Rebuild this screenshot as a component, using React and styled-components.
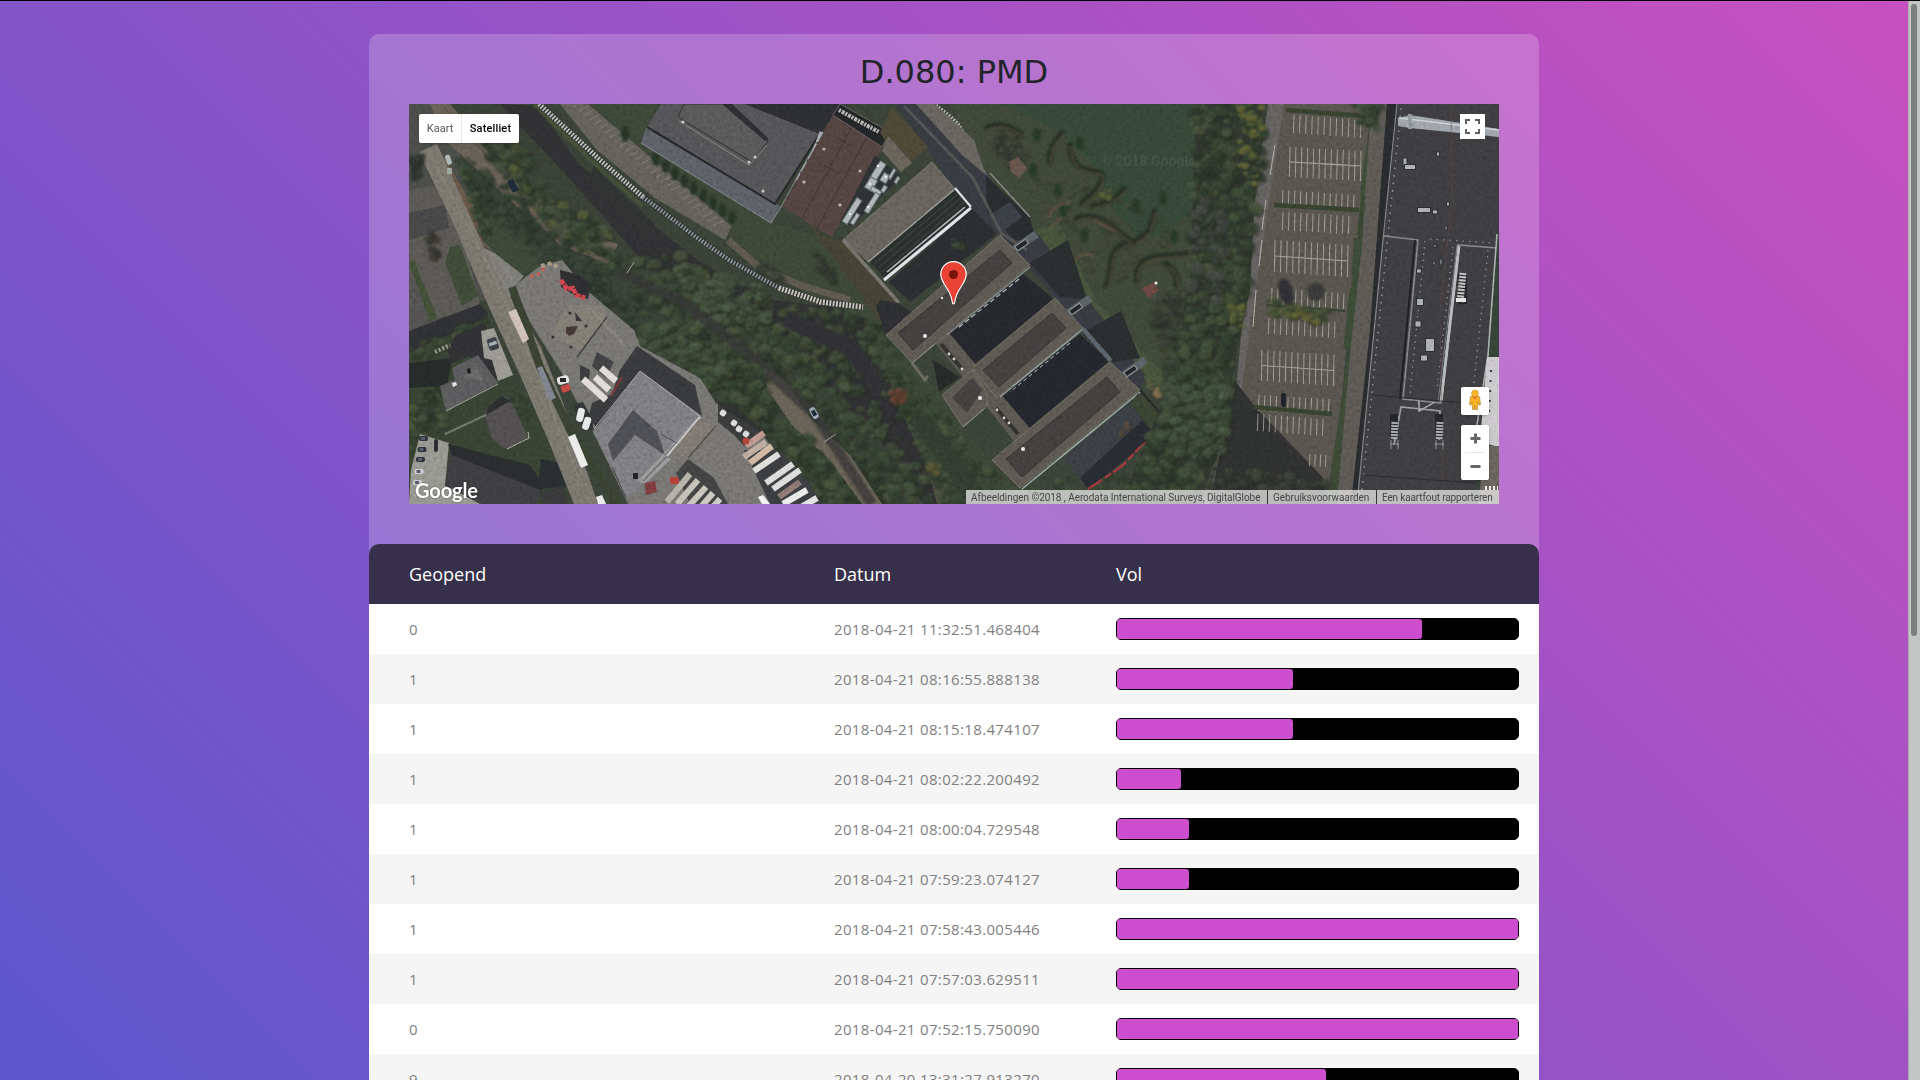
import React from "react";
import styled, { createGlobalStyle } from "styled-components";

const GlobalStyle = createGlobalStyle`
  * { box-sizing: border-box; }
  body { margin: 0; overflow: hidden; font-family: "Open Sans", "Noto Sans", sans-serif; }
`;

const Window = styled.div`
  display: flex;
  height: 1080px;
  overflow: hidden;
  border-top: 1px solid #000;
`;
const Page = styled.main`
  flex: 1;
  height: 1831px;
  display: flex;
  justify-content: center;
  align-items: flex-start;
  padding-top: 33px;
  background: linear-gradient(45deg, #4158d0, #c850c0);
`;
const Scrollbar = styled.div`
  width: 12px;
  height: 1079px;
  padding: 3px 3px 0 2px;
  background: #c4c6c5;
  border-left: 1px solid #a9adab;
`;
const Thumb = styled.div`
  width: 6px;
  height: 632px;
  border-radius: 3px;
  background: #7b8081;
`;
const Panel = styled.section`
  width: 1170px;
  border-radius: 10px;
  background: rgba(255, 255, 255, 0.2);
`;
const Title = styled.h2`
  margin: 0;
  padding: 19px 0 13px;
  font: 400 32px/38px "DejaVu Sans", sans-serif;
  color: #212529;
  text-align: center;
`;
const MapFrame = styled.div`
  position: relative;
  height: 400px;
  margin: 0 40px 40px;
  overflow: hidden;
  font-family: Roboto, sans-serif;
  & > svg { display: block; }
`;
const MapTypes = styled.div`
  position: absolute;
  left: 10px;
  top: 10px;
  height: 29px;
  display: flex;
  background: #fff;
  border-radius: 2px;
  box-shadow: 0 1px 4px -1px rgba(0, 0, 0, 0.3);
`;
const MapType = styled.button`
  border: 0;
  padding: 0;
  width: ${(p) => p.$width}px;
  background: transparent;
  border-left: ${(p) => (p.$active ? "1px solid #e8e8e8" : "0")};
  font: ${(p) => (p.$active ? 500 : 400)} 11px Roboto, sans-serif;
  letter-spacing: ${(p) => (p.$active ? 0.15 : 0)}px;
  color: ${(p) => (p.$active ? "#000" : "#565656")};
`;
const FullScreen = styled.button`
  position: absolute;
  right: 14px;
  top: 10px;
  width: 25px;
  height: 25px;
  border: 0;
  padding: 5px;
  background: #fff;
  svg { display: block; }
`;
const MapTools = styled.div`
  position: absolute;
  right: 10px;
  top: 283px;
  display: flex;
  flex-direction: column;
  gap: 10px;
`;
const ToolBox = styled.div`
  width: 28px;
  height: ${(p) => p.$height}px;
  background: #fff;
  border-radius: 2px;
  box-shadow: 0 1px 4px -1px rgba(0, 0, 0, 0.3);
  svg { display: block; }
`;
const Attribution = styled.div`
  position: absolute;
  right: 0;
  bottom: 0;
  height: 14px;
  display: flex;
  font-size: 10px;
  line-height: 15px;
  color: #444;
`;
const Credit = styled.span`
  width: ${(p) => p.$width}px;
  padding-left: 5px;
  white-space: nowrap;
  letter-spacing: ${(p) => p.$track || 0}px;
  background: rgba(245, 245, 245, 0.7);
  & + & { border-left: 1px solid #333; }
`;
const Logo = styled.div`
  position: absolute;
  left: 6px;
  bottom: 3px;
  font: 700 20px/22px Lato, sans-serif;
  letter-spacing: -0.1px;
  color: #fff;
  text-shadow: 0 0 2px rgba(0, 0, 0, 0.5);
`;
const Table = styled.div`
  border-radius: 10px 10px 0 0;
  overflow: hidden;
`;
const Row = styled.div`
  display: grid;
  grid-template-columns: 425px 282px 403px;
  align-items: center;
  padding-left: 40px;
  height: 50px;
  font-size: 15px;
  letter-spacing: 0.35px;
  color: #808080;
  background: ${(p) => (p.$even ? "#f5f5f5" : "#fff")};
`;
const HeadRow = styled(Row)`
  height: 60px;
  font-size: 18px;
  letter-spacing: 0;
  color: #fff;
  background: #36304a;
`;
const Track = styled.div`
  height: 22px;
  border: 1px solid #000;
  border-radius: 5px;
  background: #000;
`;
const Fill = styled.div`
  height: 20px;
  border-radius: 3px;
  background: #cc4ecf;
`;

const rows = [
  ["0", "2018-04-21 11:32:51.468404", 76],
  ["1", "2018-04-21 08:16:55.888138", 44],
  ["1", "2018-04-21 08:15:18.474107", 44],
  ["1", "2018-04-21 08:02:22.200492", 16],
  ["1", "2018-04-21 08:00:04.729548", 18],
  ["1", "2018-04-21 07:59:23.074127", 18],
  ["1", "2018-04-21 07:58:43.005446", 100],
  ["1", "2018-04-21 07:57:03.629511", 100],
  ["0", "2018-04-21 07:52:15.750090", 100],
  ["9", "2018-04-20 13:31:27.913270", 52],
];

/* ---------- aerial scene ---------- */
function random(seed) {
  let s = seed;
  return () => {
    s = (s * 1664525 + 1013904223) % 4294967296;
    return s / 4294967296;
  };
}
function inside(x, y, pts) {
  let hit = false;
  for (let i = 0, j = pts.length - 1; i < pts.length; j = i++) {
    const [xi, yi] = pts[i];
    const [xj, yj] = pts[j];
    if (yi > y !== yj > y && x < ((xj - xi) * (y - yi)) / (yj - yi) + xi) hit = !hit;
  }
  return hit;
}
const parse = (text) => text.split(" ").map((p) => p.split(",").map(Number));

const greens = ["#2c3829", "#34422f", "#3b4935", "#272f26", "#414b36", "#2e3b2c", "#394330"];
const dims = ["#2d332c", "#343a31", "#292d2a", "#393f34", "#30372e"];

function Canopy({ area, count, seed, size = 6, colors = greens }) {
  const pts = parse(area);
  const xs = pts.map((p) => p[0]);
  const ys = pts.map((p) => p[1]);
  const x0 = Math.min(...xs), x1 = Math.max(...xs);
  const y0 = Math.min(...ys), y1 = Math.max(...ys);
  const rnd = random(seed);
  const total = Math.round(count * 1.3);
  const items = [];
  let guard = 0;
  while (items.length < total && guard++ < total * 20) {
    const x = x0 + rnd() * (x1 - x0);
    const y = y0 + rnd() * (y1 - y0);
    if (!inside(x, y, pts)) continue;
    const r = size * (0.2 + rnd() * 0.75);
    const c = colors[Math.floor(rnd() * colors.length)];
    items.push(
      <g key={items.length}>
        <ellipse cx={x + r * 0.35} cy={y + r * 0.4} rx={r} ry={r * 0.8} fill="#20251f" opacity=".4" />
        <ellipse cx={x} cy={y} rx={r} ry={r * 0.75} fill={c} opacity=".75" />
        <circle cx={x - r * 0.3} cy={y - r * 0.3} r={r * 0.3} fill="#59634a" opacity=".25" />
      </g>
    );
  }
  return <g filter="url(#leaves)">{items}</g>;
}
const P = ({ d, c, o, s, w }) => <polygon points={d} fill={c} opacity={o} stroke={s} strokeWidth={w} />;
const L = ({ d, c, w = 1, o, dash }) => (
  <polyline points={d} fill="none" stroke={c} strokeWidth={w} opacity={o} strokeDasharray={dash} />
);

const bays = [
  [1294, 1361, 115, 18, 5, false], [1290, 1361, 147, 30, 4, true], [1283, 1354, 190, 16, 5, false],
  [1283, 1349, 212, 18, 4, false], [1275, 1348, 240, 32, 5, true], [1272, 1344, 288, 16, 5, false],
  [1269, 1335, 318, 16, 4, false], [1262, 1334, 350, 31, 5, true], [1259, 1329, 395, 16, 4, false],
  [1258, 1323, 414, 17, 5, false], [1310, 1326, 454, 12, 1, false],
];
function Bays() {
  return bays.map(([a, b, y, h, drop, cross], k) => {
    const n = Math.round((b - a) / 6);
    return (
      <g key={k} stroke="#aaa79e" strokeWidth=".9" opacity=".75">
        {Array.from({ length: n + 1 }, (_, i) => {
          const x = a + ((b - a) * i) / n;
          const yy = y + (drop * i) / n;
          return <line key={i} x1={x} y1={yy} x2={x - 0.6} y2={yy + h} />;
        })}
        {cross && <line x1={a} y1={y + h / 2} x2={b} y2={y + h / 2 + drop} strokeWidth="1.2" />}
      </g>
    );
  });
}

const trucks = [
  [764, 433, 746, 446, "#b48a80"], [766, 442, 744, 457, "#b59e91"], [772, 446, 750, 463, "#c8ac95"],
  [779, 454, 754, 471, "#dad9d6"], [793, 464, 766, 483, "#d6d6d5"], [800, 470, 773, 489, "#d8d8d7"],
  [800, 482, 779, 497, "#7d6c68"], [807, 490, 783, 504, "#e6e6e5"], [817, 498, 798, 509, "#dedede"],
  [690, 474, 667, 502, "#aaa69b"], [698, 480, 677, 504, "#bbb7ac"], [706, 487, 688, 507, "#c0bdb3"],
  [713, 493, 700, 508, "#c4c1b8"], [720, 499, 711, 509, "#c7c5bd"],
];

function Residential() {
  return (
    <g>
      <P d="409,104 436,104 470,150 523,290 409,320" c="#424440" />
      <P d="409,190 440,185 462,230 480,305 430,322 409,260" c="#504e4a" />
      <P d="409,213 445,205 449,228 409,240" c="#3f3f40" />
      <P d="409,255 438,320 409,335" c="#4a4848" />
      <P d="409,262 414,260 437,318 430,322" c="#3a4630" />
      <P d="450,247 460,245 478,296 462,306 445,262" c="#374230" />
      <P d="430,150 437,146 500,250 487,248 450,215" c="#5d4d40" />
      <P d="409,331 480,304 488,313 486,320 409,352" c="#2a2b2e" />
      <P d="409,352 488,318 512,376 556,450 570,504 409,504" c="#323b2e" />
      <Canopy area="409,345 485,318 490,328 440,350 409,370" count={60} seed={31} size={4} />
      <Canopy area="409,385 440,375 452,420 409,450" count={70} seed={32} size={6} />
      <P d="409,363 452,358 447,386 409,388" c="#222625" />
      <P d="456,335 485,323 494,365 504,376 480,384 470,356 450,364 448,350" c="#2b2b2e" />
      <L d="435,352 450,345" c="#8d8c80" w={4} dash="2 2" />
      <P d="481,331 494,328 513,375 498,381 492,360 484,358" c="#8b8982" />
      <rect x="488" y="338" width="10" height="12" rx="2" fill="#343840" transform="rotate(-18 493 344)" />
      <rect x="489" y="342" width="8" height="3" fill="#9aa1a6" transform="rotate(-18 493 344)" />
      <P d="452,368 478,355 498,383 446,411 440,386 455,380" c="#515052" />
      <L d="446,411 498,384" c="#919087" />
      <P d="462,378 476,366 484,381" c="#5d5c5b" />
      <P d="452,383 456,382 457,385 453,387" c="#e0e0dc" />
      <P d="467,369 470,368 471,373 468,374" c="#18191b" />
      <P d="484,413 502,396 511,400 528,437 506,449 492,439" c="#494647" />
      <P d="488,407 502,396 510,401 486,415" c="#262829" />
      <L d="507,449 529,438 528,432" c="#a8a49b" />
      <L d="445,434 486,415" c="#77806f" w={2} o={0.7} />
      <Canopy area="509,398 528,390 536,410 524,420" count={22} seed={33} size={4} />
      <P d="420,434 449,443 445,486 495,504 409,504 411,470" c="#878780" />
      <P d="451,451 540,485 538,504 480,504 445,485" c="#37373a" />
      <P d="448,444 530,465 545,487 540,490 452,455" c="#252729" />
      <P d="541,459 562,463 566,487 538,489" c="#24282a" />
      <P d="538,493 562,486 568,504 545,504" c="#333335" />
      {[436, 447, 457, 469, 480].map((y, i) => (
        <g key={y}>
          <rect x={419 - i * 1.5} y={y} width="9" height="5" rx="2" fill={i > 2 ? "#c9cacc" : "#292b32"} />
          <rect x={421 - i * 1.5} y={y + 1} width="4" height="3" fill="#4a505d" />
        </g>
      ))}
      <rect x="434" y="439" width="4" height="13" rx="2" fill="#25272b" />
    </g>
  );
}

function Depot() {
  return (
    <g>
      <P d="514,286 540,266 562,260 590,293 634,330 640,346 700,378 716,403 760,432 818,504 628,504 593,432 560,370 530,322" c="#696865" />
      <P d="484,248 496,254 524,276 513,288 510,300" c="#706f6b" />
      <L d="512,287 540,367 575,440 618,504" c="#333a2b" w={8} />
      <P d="568,305 602,305 608,320 580,350 550,337" c="#726f67" />
      <L d="607,317 577,357" c="#363736" w={1.4} />
      {[[570, 313], [571, 347], [586, 326], [553, 337]].map(([x, y]) => <circle key={x} cx={x} cy={y} r="1.6" fill="#2b2b2b" />)}
      <P d="566,327 578,326 574,334 569,336 566,333" c="#3c312e" />
      <P d="575,312 582,321 576,321" c="#313132" />
      {[0, 1, 2, 3, 4, 5].map((i) => <L key={i} d={`${590 + i * 5},${308 + i * 5} ${608 + i * 4},${330 + i * 4}`} c="#8a8882" o={0.4} />)}
      <P d="560,270 580,275 591,285 588,299 576,296 561,287" c="#29292c" />
      <L d="561,280 567,289 573,288 576,295 585,298" c="#c83d43" w={4.5} dash="5 1" />
      <L d="530,277 541,273 545,266" c="#b5544a" w={3} dash="4 3" />
      <L d="541,266 552,263 558,268" c="#998b75" w={4} dash="4 3" />
      <P d="597,352 614,362 606,378 592,366" c="#393a3b" />
      <P d="580,365 590,370 588,388 580,380" c="#333435" />
      <P d="637,346 695,385 702,416 640,371 598,428 588,420 592,403 612,394 620,370" c="#323335" />
      <P d="640,371 702,417 665,457 638,489 626,498 612,467 593,432" c="#6f6f73" />
      <P d="633,410 657,431 665,455 635,435 613,461 608,444" c="#45464b" />
      <P d="635,435 661,455 638,478 626,498 612,466" c="#707073" />
      <L d="593,430 640,371 700,416 660,458" c="#97979a" />
      <L d="700,417 668,455 650,471" c="#bfbfbe" w={2} />
      <L d="612,467 626,498" c="#3a3b3e" />
      <L d="662,435 677,443" c="#414247" />
      <P d="663,455 671,459 645,484 638,480" c="#8b8b8c" />
      <L d="667,456 643,481" c="#5b5c60" w={1.4} />
      <rect x="633" y="473" width="5" height="6" fill="#1e2024" />
      <P d="645,483 655,481 657,492 646,495" c="#6f3535" />
      <P d="699,419 716,428 688,459 671,453" c="#706b65" />
      <L d="716,426 688,458" c="#45433f" w={1.2} />
      <g stroke="#ded6d2" strokeWidth="6.5">
        <line x1="601" y1="368" x2="616" y2="381" />
        <line x1="595" y1="377" x2="609" y2="390" />
        <line x1="583" y1="379" x2="606" y2="400" />
      </g>
      <L d="611,396 622,377" c="#6c2f34" w={2} />
      <rect x="557" y="376" width="12" height="8" rx="3" fill="#e0e0e0" transform="rotate(-15 563 380)" />
      <rect x="560" y="378" width="6" height="4" fill="#202226" />
      <rect x="561" y="385" width="9" height="7" rx="2" fill="#b9403a" transform="rotate(-20 565 388)" />
      <P d="573,404 583,402 590,415 594,430 583,430" c="#2b2e2f" />
      <rect x="577" y="408" width="7" height="14" rx="3" fill="#e4e5e5" transform="rotate(12 581 415)" />
      <rect x="583" y="417" width="7" height="13" rx="3" fill="#e4e5e5" transform="rotate(18 587 424)" />
      <P d="718,400 735,405 763,432 744,446 735,436 718,422" c="#2a2b2d" o={0.85} />
      {[[723, 413], [734, 423], [739, 429], [746, 434]].map(([x, y]) => <rect key={x} x={x - 3} y={y - 3} width="6" height="6" rx="2" fill="#d4d5d6" transform={`rotate(35 ${x} ${y})`} />)}
      <P d="676,473 688,459 714,478 728,504 690,504" c="#3a3b3b" />
      <P d="744,450 780,450 810,484 822,504 770,504 756,475" c="#343638" />
      {trucks.map(([a, b, c, d, color], i) => (
        <line key={i} x1={a} y1={b} x2={c} y2={d} stroke={color} strokeWidth={i < 9 ? 6.2 : 6} />
      ))}
      <circle cx="746" cy="441" r="3.5" fill="#a93b34" />
      <rect x="670" y="477" width="9" height="7" rx="2" fill="#ab3833" />
      <P d="758,497 763,495 770,504 762,504" c="#f0f0ef" />
    </g>
  );
}

function School() {
  const roofs = [
    ["1000,235 1030,265 912,363 886,335", "1000,250 1012,263 913,350 898,333"],
    ["1055,298 1083,328 997,398 972,368", "1052,313 1066,328 999,387 983,370"],
    ["1110,362 1140,390 1020,488 992,460", "1107,377 1120,392 1022,477 1006,459"],
  ];
  return (
    <g>
      <P d="896,104 920,104 1020,210 1145,375 1140,390 1110,362 1055,298 1000,235 968,208" c="#313439" />
      <P d="986,176 1030,217 1035,240 1015,240 987,212" c="#242728" />
      <P d="990,215 1010,202 1022,217 1001,233" c="#34383e" />
      <P d="1030,263 1068,240 1087,299 1060,297" c="#242829" />
      <P d="1082,333 1121,311 1140,358 1110,362" c="#242829" />
      <L d="904,106 973,178 1001,233 1027,250" c="#565650" w={3} o={0.65} />
      <P d="916,104 935,104 974,140 986,175 962,155" c="#5b5854" />
      <L d="990,173 1030,217" c="#777b73" w={1.4} />
      <P d="892,107 928,147 902,170 880,132" c="#444030" />
      <P d="888,136 912,163 901,172 882,151" c="#5c5850" />
      <P d="932,162 955,189 868,262 843,240" c="#5b5852" />
      <L d="843,240 899,303" c="#6a6761" w={3.5} />
      <L d="843,240 932,162 955,189" c="#6c6a65" />
      <P d="955,189 970,207 887,280 870,262" c="#252a28" />
      {[0, 1, 2].map((i) => <L key={i} d={`${958 + i * 3},${194 + i * 4} ${874 + i * 4},${264 + i * 4}`} c="#414a43" o={0.7} />)}
      <L d="955,188 971,207" c="#d9dde0" w={2} />
      <L d="971,208 884,280" c="#dde1e5" w={3} />
      <L d="965,207 887,272" c="#aeb3b8" w={1.6} />
      <L d="955,189 868,262" c="#8a8d8a" w={1.3} />
      <P d="972,209 997,234 910,302 889,282" c="#27282b" />
      <Canopy area="950,238 962,235 966,248 955,252" count={8} seed={71} size={4} />
      <P d="880,300 898,303 912,312 886,336 876,306" c="#28292b" />
      <P d="1023,274 1054,299 972,366 946,335" c="#212327" />
      <P d="1080,334 1109,361 1028,429 1001,397" c="#1f2227" />
      <P d="1130,402 1159,433 1088,489 1064,458" c="#34383c" />
      <P d="1148,415 1159,433 1088,489 1080,478" c="#23262c" />
      <P d="933,340 950,334 1033,432 1018,446" c="#514e48" />
      <P d="933,360 960,377 939,392" c="#212423" />
      <L d="941,344 962,369" c="#2b2c2a" w={4} />
      <L d="996,408 1018,434" c="#2b2c2a" w={4} />
      {[[949, 354], [954, 359], [962, 369], [997, 410], [1004, 418], [1009, 423]].map(([x, y]) => <circle key={x} cx={x} cy={y} r="1.4" fill="#c8c8c3" />)}
      {roofs.map(([outer, inner]) => (
        <g key={outer}>
          <P d={outer} c="#524f49" s="#66635c" w={1} />
          <P d={inner} c="#3b3838" s="#2f2d2d" w={1} />
        </g>
      ))}
      <P d="972,370 987,393 987,406 963,427 942,395" c="#514f49" s="#66635c" w={1} />
      <P d="972,378 982,390 967,413 952,398" c="#3b3838" />
      <L d="1030,267 947,335" c="#747b7b" w={1.5} />
      <L d="1019,279 958,328" c="#aeb4b6" w={1.1} dash="5 3" />
      <L d="1083,329 1000,397" c="#818a8b" w={1.5} />
      <L d="1070,343 1010,392" c="#a8aeb0" w={1} dash="4 3" />
      <L d="1140,392 1022,489" c="#8b9696" w={1.6} />
      <L d="912,363 935,344" c="#7d8580" />
      <L d="912,363 925,380 928,376" c="#5f5c55" w={3} />
      <L d="963,427 985,408" c="#7d8478" />
      {[[925, 336], [980, 398], [1023, 449]].map(([x, y]) => <circle key={x} cx={x} cy={y} r="2" fill="#e0e4e1" />)}
      <circle cx="942" cy="298" r="1.2" fill="#ddd" />
      {[[1025, 242], [1079, 306], [1134, 368]].map(([x, y]) => (
        <g key={x} transform={`rotate(-35 ${x} ${y})`}>
          <rect x={x - 13} y={y - 4} width="27" height="8" fill="#50575a" />
          <rect x={x - 11} y={y - 2} width="13" height="5" fill="#1d2022" stroke="#7b827e" />
        </g>
      ))}
      <L d="1083,329 1111,361" c="#4f5860" w={4.5} />
      <P d="1138,393 1168,424 1154,434 1130,404" c="#343c2d" />
      <L d="1140,390 1169,423" c="#222420" w={2} />
      <P d="1155,434 1166,421 1171,428 1160,442" c="#6b665e" />
      <L d="1088,489 1112,473 1122,466 1139,448 1154,436" c="#963035" w={2.2} dash="17 3 8 2" />
      <Canopy area="1120,424 1128,420 1130,435 1121,438" count={5} seed={72} size={3.5} colors={["#5f4a38", "#50432f"]} />
      <circle cx="1158" cy="393" r="5" fill="#8a6d4b" opacity=".75" filter="url(#leaves)" />
      <Canopy area="1146,377 1161,385 1163,402 1148,390" count={8} seed={73} size={3} colors={["#736146", "#5f5d44"]} />
    </g>
  );
}

function Factories() {
  return (
    <g>
      <P d="560,104 588,104 732,226 725,240 655,198 597,150" c="#585650" />
      {Array.from({ length: 28 }, (_, i) => (
        <L key={i} d={`${573 + i * 5.2},${107 + i * 4.4} ${582 + i * 5.2},${102 + i * 4.4}`} c="#807c70" o={0.6} />
      ))}
      <P d="590,104 660,104 646,128 771,223 832,240 900,310 880,325 800,290 728,236 732,226" c="#363f31" />
      <g filter="url(#leaves)">
        {Array.from({ length: 9 }, (_, i) => <ellipse key={i} cx={656 + i * 9.5} cy={159 + i * 7.3} rx="4" ry="7" fill="#232e21" />)}
        <ellipse cx="625" cy="134" rx="4" ry="8" fill="#232e21" />
      </g>
      <P d="725,104 843,104 820,134" c="#28292c" />
      <P d="661,104 745,104 820,134 775,204 646,128" c="#4b4b4d" />
      <P d="745,104 770,104 822,130 820,134" c="#28292c" />
      <P d="690,104 725,104 768,141 752,162 678,117 684,104" c="#4f4f50" s="#2b2c2e" w={1} />
      <P d="722,104 732,104 769,139 765,141" c="#28292c" />
      <L d="679,121 749,165 767,145" c="#777776" />
      <P d="646,128 780,206 771,223 641,143" c="#52555b" />
      <L d="647,127 775,204 819,135" c="#202225" w={2} />
      <L d="641,143 771,223 782,205 821,134" c="#6c7074" w={1.2} />
      {[[683, 122], [749, 162], [755, 157], [763, 191]].map(([x, y]) => <circle key={x} cx={x} cy={y} r="1.5" fill="#bcbcba" />)}
      <L d="822,132 815,151 798,181" c="#9aa1a7" w={5} dash="11 2 18 3" />
      <P d="833,115 883,147 832,237 782,207" c="#4a3c39" />
      {["852,127 802,218", "867,137 817,228", "838,138 850,146", "824,165 840,174"].map((d) => <L key={d} d={d} c="#382d2c" w={1} />)}
      <P d="840,104 890,132 882,147 833,115" c="#1f2123" s="#5a5a57" w={1} />
      <L d="839,110 857,120 879,132" c="#a9aaa4" w={4} dash="2 1.2 3 1" />
      {[[824, 149], [860, 171], [840, 205], [804, 182]].map(([x, y]) => <circle key={x} cx={x} cy={y} r="1.6" fill="#b0a8a4" />)}
      <P d="875,155 902,177 851,226 840,222" c="#292c2e" />
      {[[878, 171, 7, 20], [871, 184, 8, 12], [885, 178, 7, 9], [876, 191, 11, 5], [852, 211, 6, 28], [872, 203, 5, 22], [855, 219, 4, 12], [892, 174, 3, 11], [884, 189, 4, 7], [897, 180, 3, 7]].map(([x, y, w, h]) => (
        <rect key={`${x}${y}`} x={x - w / 2} y={y - h / 2} width={w} height={h} fill="#a3aaab" stroke="#545c5c" transform={`rotate(32 ${x} ${y})`} />
      ))}
      {[[878, 166], [870, 184], [850, 214], [886, 177], [868, 207]].map(([x, y]) => <circle key={x} cx={x} cy={y} r="1.3" fill="#e8ebeb" />)}
      {[[925, 172], [928, 177], [852, 234], [856, 239]].map(([x, y]) => <circle key={x} cx={x} cy={y} r="1.8" fill="#bfbfba" />)}
      <P d="808,225 832,239 845,242 902,306 881,325 850,280" c="#3c3b2e" />
      <L d="728,240 760,268 800,285 850,300" c="#534e46" w={7} />
      <Canopy area="745,255 765,262 790,282 760,275" count={18} seed={61} size={5} colors={dims} />
      <Canopy area="812,248 830,265 842,290 822,275" count={20} seed={62} size={5} colors={dims} />
      <L d="539,104 600,160 643,197 696,237 729,260 779,288 821,302 863,307" c="#2b2d2b" w={6} />
      <L d="539,104 600,160 643,197" c="#b5b7b1" w={5} dash="1.7 1.5" />
      <L d="643,197 696,237 729,260 779,288" c="#7f8a90" w={4.5} dash="1.5 1.7" />
      <L d="779,288 821,302 863,307" c="#c2beb6" w={5.5} dash="1.8 1.5" />
      <L d="933,104 950,117 970,137 982,157 987,177" c="#aaa7a0" w={5} dash="1.7 1.5" />
      <L d="987,177 987,208" c="#46535a" w={5} dash="1.7 1.5" />
    </g>
  );
}

function Park() {
  const hedges = [
    "M988 127q16-6 33 7", "M1062 133q-14 14-12 30", "M1070 145c0 24 15 25 27 27s2 18-15 31",
    "M1124 189q-14 16-31 17", "M1154 211c-1 24-14 29-31 34s-9 30-17 40", "M1186 254c-22 4-52-4-49 27",
    "M1077 218q17-5 32 6t24 20", "M1166 264q12 6 11 22",
  ];
  return (
    <g>
      <P d="950,104 1200,104 1196,300 1180,400 1150,385 1090,310 1035,240 987,175" c="#384032" />
      <P d="1000,104 1196,104 1195,207 1170,232 1140,240 1110,205 1098,170 1058,130" c="#304032" />
      <g filter="url(#leaves)">
        <P d="1032,230 1060,225 1095,300 1160,370 1168,398 1140,375 1100,315" c="#434e37" o={0.65} />
      </g>
      <Canopy area="985,125 1018,130 1028,170 1000,165" count={20} seed={81} colors={dims} size={7} />
      <Canopy area="1030,175 1120,190 1180,230 1170,260 1100,290 1060,240" count={75} seed={82} colors={["#343c2f", "#3a3f31", "#403f30", "#30382d"]} size={4} />
      <g filter="url(#leaves)">
        {hedges.map((d) => (
          <g key={d} fill="none" strokeLinecap="round">
            <path d={d} stroke="#242b23" strokeWidth="6" />
            <path d={d} stroke="#423e30" strokeWidth="1.8" transform="translate(1 2)" />
          </g>
        ))}
        {[[1037, 135], [1080, 143], [1033, 170], [1063, 210], [1136, 206], [1163, 198], [1174, 237], [1084, 235], [1058, 190]].map(([x, y]) => (
          <ellipse key={x} cx={x} cy={y} rx="4" ry="7" fill="#243024" />
        ))}
      </g>
      <P d="1009,162 1018,157 1027,168 1020,178 1011,172" c="#5b4b42" />
      <path d="M1048 218q6-15 22-15m-20 24 12-10m53 15-21-12m-19 41q8-10 19-5" fill="none" stroke="#55473b" strokeWidth="3.5" opacity=".6" />
      <P d="1142,288 1154,282 1159,290 1149,299" c="#5f403a" />
      <Canopy area="1097,188 1113,186 1112,199 1099,197" count={10} seed={83} size={4} colors={["#535b31", "#475132"]} />
      <text x="1101" y="166" fontFamily="Roboto, sans-serif" fontSize="14" fontWeight="700" fill="#4a594c" opacity=".4">© 2018 Google</text>
      <circle cx="1156" cy="283" r="1.5" fill="#ddd" />
      <circle cx="1094" cy="318" r="1.7" fill="#ddd" />
      <Canopy area="1150,300 1196,285 1196,390 1168,390" count={75} seed={84} size={8} colors={dims} />
    </g>
  );
}

function CarPark() {
  return (
    <g>
      <P d="1268,104 1286,104 1260,270 1247,400 1220,504 1200,504 1235,400 1250,240" c="#585655" />
      <P d="1284,104 1371,104 1361,210 1346,350 1335,485 1290,480 1240,400 1260,260" c="#4e4b45" />
      <P d="1234,380 1258,410 1325,480 1325,504 1210,504" c="#2a2b2b" />
      <Bays />
      {["1286,110 1365,116", "1274,205 1359,210", "1266,305 1345,311", "1254,407 1332,414"].map((d, i) => <L key={d} d={d} c="#303a2a" w={i === 2 ? 2 : 4.5} />)}
      <Canopy area="1266,300 1330,308 1328,324 1266,315" count={60} seed={91} size={5} colors={["#3d4a2e", "#4f572f", "#303d2b", "#5d5e30"]} />
      <g filter="url(#leaves)">
        <ellipse cx="1286" cy="292" rx="7" ry="14" fill="#2a2b2d" transform="rotate(-15 1286 292)" />
        <ellipse cx="1316" cy="292" rx="9" ry="9" fill="#303132" />
      </g>
      <rect x="1281" y="393" width="5" height="14" rx="2" fill="#1b1f25" />
      <L d="1275,145 1270,175" c="#a5a098" />
      <L d="1266,200 1262,230" c="#a5a098" />
      <L d="1262,240 1259,266" c="#a5a098" />
      <L d="1256,290 1253,327" c="#a5a098" />
      <P d="1366,148 1376,148 1371,196 1360,196" c="#354331" />
      <P d="1361,197 1369,197 1365,235 1357,235" c="#333f2e" />
      <P d="1354,238 1365,238 1361,287 1351,287" c="#354231" />
      <P d="1350,288 1359,288 1353,350 1343,350" c="#354230" />
      <P d="1348,355 1352,355 1337,504 1326,504" c="#364130" />
      <P d="1371,104 1387,104 1369,350 1351,504 1337,504 1350,355 1362,245" c="#524f4b" />
      <Canopy area="1352,104 1380,104 1377,132 1359,124" count={30} seed={92} size={5} />
      <P d="1387,104 1398,104 1380,290 1357,504 1351,504 1370,330" c="#242628" />
      <P d="1398,104 1499,104 1499,504 1357,504 1383,240" c="#373639" />
      <L d="1397,104 1383,240 1357,504" c="#727577" w={1.2} />
      <L d="1401,108 1388,235 1362,490" c="#8c8d8f" w={1.3} dash="1.5 6" />
      <P d="1398,118 1410,115 1499,129 1499,137 1410,128 1398,126" c="#8f969d" />
      <L d="1399,118 1499,130" c="#c6cacc" w={1.6} />
      <g transform="translate(1408 114)"><rect width="4" height="15" fill="#80868c" /></g>
      <L d="1384,236 1418,240 1403,399 1441,403 1458,245 1497,248" c="#727779" w={1.7} />
      <L d="1415,240 1400,399" c="#1b1c20" w={2} />
      <L d="1459,246 1441,402" c="#aeb2b4" w={2.8} />
      <L d="1457,246 1438,402" c="#696c70" w={1} />
      <L d="1425,241 1410,394" c="#88898b" w={1.2} dash="1.3 5" />
      <L d="1453,247 1437,390" c="#88898b" w={1.2} dash="1.3 5" />
      <L d="1488,250 1472,400" c="#88898b" w={1.2} dash="1.3 5" />
      <L d="1430,239 1493,243" c="#7d7d7f" w={1.3} dash="1.5 5" />
      <L d="1451,105 1452,200 1440,310 1443,500" c="#57403a" o={0.5} />
      <L d="1373,395 1485,405" c="#25262a" />
      <L d="1362,475 1490,484" c="#25262a" />
      <P d="1497,234 1499,234 1499,504 1475,504 1483,400" c="#2f3b30" />
      <L d="1497,234 1488,355 1477,425" c="#a0a5a6" w={1.5} />
      <P d="1487,357 1499,357 1499,447 1480,442" c="#c3c0c3" />
      <L d="1491,370 1489,420" c="#343437" w={2} dash="2 8" />
      <P d="1485,446 1499,446 1499,504 1478,504" c="#5d5852" />
      <L d="1485,488 1498,488" c="#eee" w={4} dash="2 2" />
      {[[1405, 162, 4, 8], [1410, 167, 11, 5], [1424, 210, 13, 5], [1435, 212, 5, 4], [1438, 154, 3, 4], [1448, 204, 3, 4], [1446, 228, 2, 4], [1419, 271, 5, 4], [1420, 302, 7, 7], [1418, 324, 6, 6], [1430, 345, 9, 13], [1424, 358, 7, 6], [1461, 139, 2, 3], [1435, 246, 2, 3], [1434, 263, 2, 4], [1441, 262, 2, 6]].map(([x, y, w, h]) => (
        <rect key={`${x}${y}`} x={x - w / 2} y={y - h / 2} width={w} height={h} fill="#a1a4a6" stroke="#25272a" />
      ))}
      <rect x="1458" y="273" width="9" height="31" fill="#202125" />
      <L d="1463,273 1460,302" c="#b8bbb9" w={7} dash="2 1.2" />
      <rect x="1456" y="298" width="10" height="4" fill="#dfe1e1" />
      <L d="1394,445 1401,407 1440,411 1439,440" c="#868c8f" w={1.7} />
      <L d="1419,401 1419,411 1435,402" c="#9da2a4" w={1.4} />
      {[1395, 1440].map((x) => (
        <g key={x}>
          <rect x={x - 5} y="414" width="8" height="25" fill="#202126" />
          <L d={`${x},422 ${x - 1},440`} c="#999d9e" w={7} dash="2 1" />
          <path d={`M${x - 4} 440v9m7-9v9m-8-5h9`} stroke="#7e8385" fill="none" />
        </g>
      ))}
      <P d="1196,104 1260,104 1250,290 1235,360 1228,420 1200,504 1120,504 1165,395 1190,280" c="#2c322b" />
      <Canopy area="1192,104 1266,104 1258,200 1248,290 1235,360 1228,420 1190,504 1120,504 1165,395 1190,280" count={520} seed={93} size={8} />
      <Canopy area="1238,104 1264,104 1260,190 1240,180" count={35} seed={94} size={5} colors={["#605f31", "#4e572f", "#37482f"]} />
      <Canopy area="1228,300 1245,300 1242,328 1230,320" count={12} seed={95} size={4.5} colors={["#626131", "#505a31"]} />
      <Canopy area="1195,190 1225,210 1222,300 1190,310" count={35} seed={96} size={8} colors={["#3a3c38", "#3f403d", "#2f342f"]} />
      <Canopy area="1169,385 1230,385 1225,450 1175,455" count={100} seed={97} size={7} colors={["#3d4a38", "#465440", "#344232", "#3d4a39"]} />
      <Canopy area="1200,465 1330,480 1320,504 1190,504" count={70} seed={98} size={6} colors={dims} />
    </g>
  );
}

function Woodland() {
  return (
    <g>
      <P d="436,104 540,104 700,240 870,310 1000,504 860,504 720,400 620,310 520,280" c="#333a31" />
      <P d="430,104 450,104 505,170 552,222 618,244 608,264 560,245 510,200 445,140" c="#5c554c" />
      <L d="443,106 490,160 548,224 600,256" c="#403e36" w={1} />
      <P d="464,165 480,180 535,240 545,265 518,275 482,240" c="#353f31" />
      <Canopy area="458,160 470,158 530,205 600,270 645,340 600,300 540,260 475,200" count={210} seed={2} size={6} colors={["#28332b", "#2e382d", "#333e31"]} />
      <Canopy area="457,163 464,165 490,225 482,245" count={45} seed={18} size={4} />
      <Canopy area="475,130 520,140 545,190 610,230 620,270 600,268 545,220 498,170" count={160} seed={3} size={7} colors={[...greens, "#4d5431"]} />
      <P d="500,104 536,106 580,165 640,215 700,262 770,300 860,310 890,370 910,420 955,504 915,504 880,440 820,380 770,320 700,275 650,270 580,190" c="#2b2b2d" />
      <L d="534,104 600,169 643,206" c="#3b4530" w={4} />
      <L d="590,172 650,229" c="#2b2d2c" w={14} />
      <Canopy area="620,258 680,255 760,300 840,340 880,410 940,504 830,504 790,430 720,400 640,335" count={560} seed={4} size={8} />
      <Canopy area="670,260 760,285 770,320 700,325" count={90} seed={5} size={7} colors={["#3e4a3a", "#465340", "#343f2f", "#444f39"]} />
      <Canopy area="780,300 870,310 905,380 905,430 850,350 790,320" count={120} seed={6} size={6} />
      <g filter="url(#leaves)">
        <L d="785,318 850,348 888,400 925,440 950,504" c="#2c2c2d" w={17} />
      </g>
      <P d="762,366 786,382 812,420 850,455 882,504 862,504 830,460 792,425 768,390" c="#5c564c" />
      <g filter="url(#leaves)">
        <L d="620,272 680,300 750,355 815,415 872,504" c="#313030" w={10} o={0.8} />
      </g>
      <Canopy area="690,330 760,365 785,430 800,450 740,425 710,395" count={120} seed={7} size={7} />
      <Canopy area="640,310 700,345 730,365 705,390 640,345" count={100} seed={8} size={7} colors={["#3b4835", "#34402f", "#404d39"]} />
      <Canopy area="770,445 810,435 855,504 820,504" count={90} seed={9} size={7} />
      <L d="890,390 925,445 940,504" c="#49453c" w={6} />
      <P d="886,336 912,365 942,395 963,428 990,460 1020,490 1030,504 945,504 905,420 870,330" c="#353e31" />
      <Canopy area="865,320 890,325 905,370 960,430 1000,480 990,504 940,504 910,430 880,390" count={160} seed={10} size={6} />
      <P d="910,420 930,415 992,504 968,504" c="#2c342b" o={0.8} />
      <circle cx="899" cy="397" r="8" fill="#54372c" filter="url(#leaves)" />
      <Canopy area="890,390 908,390 908,404 892,404" count={12} seed={11} size={4} colors={["#603c30", "#4e3428"]} />
      <Canopy area="926,462 940,468 935,478 924,474" count={12} seed={12} size={4} colors={["#5c5630", "#4b5030"]} />
      <rect x="811" y="407" width="6" height="12" rx="2" fill="#8f9ca5" transform="rotate(-28 814 413)" />
      <rect x="812" y="410" width="4" height="6" fill="#182330" transform="rotate(-28 814 413)" />
      <L d="824,442 836,434" c="#8f8e87" />
      <L d="627,273 634,262" c="#8f8e87" />
      <rect x="509" y="179" width="7" height="13" rx="2" fill="#1b2532" transform="rotate(-28 513 185)" />
      <Canopy area="1065,480 1095,460 1120,475 1130,504 1040,504 1000,490" count={55} seed={13} size={6} />
    </g>
  );
}

function Satellite() {
  return (
    <svg width="1090" height="400" viewBox="409 104 1090 400" aria-hidden="true">
      <defs>
        <filter id="grain" x="0" y="0" width="100%" height="100%">
          <feTurbulence type="fractalNoise" baseFrequency="0.3" numOctaves="3" seed="5" />
          <feColorMatrix values="0.5 0.5 0 0 0  0.5 0.5 0 0 0  0.5 0.5 0 0 0  0 0 0 0 1" />
        </filter>
        <filter id="leaves">
          <feGaussianBlur stdDeviation="0.9" />
        </filter>
      </defs>
      <rect x="409" y="104" width="1090" height="400" fill="#343b32" />
      <Residential />
      <Woodland />
      <P d="419,152 437,144 483,245 512,300 540,345 562,400 598,504 574,504 548,440 520,375 488,305 454,225" c="#6c6961" />
      <L d="428,150 490,268 540,380 580,480" c="#7d7a71" w={2} o={0.4} />
      <Depot />
      <P d="508,312 516,309 529,339 523,343" c="#c7b6af" />
      <P d="537,368 542,366 556,398 549,401" c="#70747e" />
      <P d="568,437 575,434 588,465 581,468" c="#e8e8e7" />
      <P d="596,497 602,495 606,504 598,504" c="#e8e8e7" />
      <rect x="446" y="155" width="5" height="10" rx="2" fill="#a6adaf" transform="rotate(-20 448 160)" />
      <rect x="447" y="168" width="5" height="6" rx="1" fill="#8f9d93" />
      <Canopy area="409,158 421,155 424,175 412,178" count={14} seed={51} size={6} colors={["#282c29", "#303631"]} />
      <Canopy area="430,230 437,240 439,262 426,256 424,240" count={14} seed={52} size={5} colors={["#302f2c", "#41352f", "#2b302c"]} />
      <Factories />
      <Park />
      <School />
      <CarPark />
      <rect x="409" y="104" width="1090" height="400" filter="url(#grain)" opacity=".32" style={{ mixBlendMode: "overlay" }} />
      <g transform="translate(940 261)">
        <path d="M13.5 .7C6.3.7.8 6.200.8 13.200c0 10 10 14 11.500 28 .1 1.300.5 1.700 1.200 1.700s1.100-.4 1.200-1.700c1.500-14 11.500-18 11.500-28C26.200 6.200 20.700.7 13.500.7z" fill="#ea4335" stroke="#fff" strokeWidth="1.2" />
        <circle cx="13.500" cy="13.500" r="4.500" fill="#7b130d" />
      </g>
    </svg>
  );
}

export default function App() {
  return (
    <>
      <GlobalStyle />
      <Window>
        <Page>
          <Panel>
            <Title>D.080: PMD</Title>
            <MapFrame>
              <Satellite />
              <MapTypes>
                <MapType $width={42}>Kaart</MapType>
                <MapType $width={58} $active>Satelliet</MapType>
              </MapTypes>
              <FullScreen aria-label="Volledig scherm">
                <svg width="15" height="15" viewBox="0 0 15 15" fill="none" stroke="#606060" strokeWidth="2">
                  <path d="M1 5V1h4M10 1h4v4M14 10v4h-4M5 14H1v-4" />
                </svg>
              </FullScreen>
              <MapTools>
                <ToolBox $height={28}>
                  <svg width="28" height="28" viewBox="0 0 28 28">
                    <path d="M9.500 9.500h9l1 8-1.500.5-1-3-.5 7.500h-2l-.5-4-.5 4h-2L11 15l-1 3-1.500-.5z" fill="#fbb31f" stroke="#a87b2c" strokeWidth=".6" />
                    <path d="m11.500 9.500 2.500 3 2.500-3z" fill="#e6682d" />
                    <circle cx="14" cy="6.500" r="3.400" fill="#fdb72a" stroke="#b7812a" strokeWidth=".5" />
                  </svg>
                </ToolBox>
                <ToolBox $height={55}>
                  <svg width="28" height="55" viewBox="0 0 28 55" fill="none" stroke="#666" strokeWidth="3">
                    <path d="M9.500 13.500h10M14.500 8.500v10M9.500 41.500h10" />
                    <path d="M4 27.500h19" stroke="#e6e6e6" strokeWidth="1" />
                  </svg>
                </ToolBox>
              </MapTools>
              <Logo>Google</Logo>
              <Attribution>
                <Credit $width={301} $track={-0.06}>Afbeeldingen ©2018 , Aerodata International Surveys, DigitalGlobe</Credit>
                <Credit $width={109} $track={-0.04}>Gebruiksvoorwaarden</Credit>
                <Credit $width={123} $track={-0.14}>Een kaartfout rapporteren</Credit>
              </Attribution>
            </MapFrame>
            <Table>
              <HeadRow>
                <div>Geopend</div>
                <div>Datum</div>
                <div>Vol</div>
              </HeadRow>
              {rows.map(([opened, date, level], i) => (
                <Row key={date} $even={i % 2 === 1}>
                  <div>{opened}</div>
                  <div>{date}</div>
                  <Track>
                    <Fill style={{ width: `${level}%` }} />
                  </Track>
                </Row>
              ))}
            </Table>
          </Panel>
        </Page>
        <Scrollbar>
          <Thumb />
        </Scrollbar>
      </Window>
    </>
  );
}
